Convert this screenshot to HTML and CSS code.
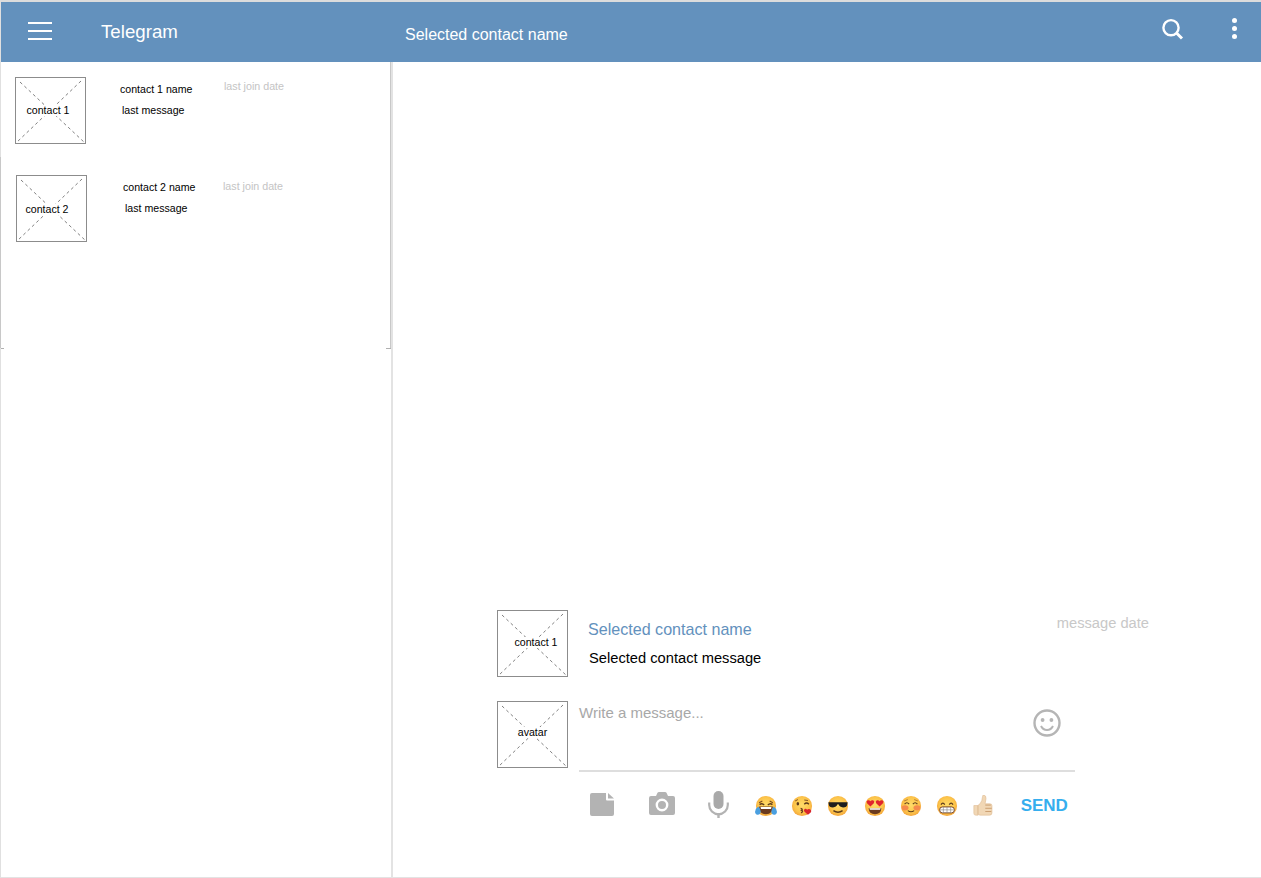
FILE: index.html
```html
<!DOCTYPE html>
<html lang="en">
<head>
  <meta charset="UTF-8">
  <meta name="viewport" content="width=device-width, initial-scale=1.0">
  <title>Telegram</title>
  <link rel="stylesheet" href="styles.css">
</head>
<body>

<svg class="defs" width="0" height="0" aria-hidden="true">
  <defs>
    <radialGradient id="face" cx="50%" cy="45%" r="55%">
      <stop offset="0%" stop-color="#ffdc6a"/>
      <stop offset="70%" stop-color="#fcc44a"/>
      <stop offset="100%" stop-color="#f4a63c"/>
    </radialGradient>
    <symbol id="x-box" viewBox="0 0 69 65">
      <line x1="4" y1="4" x2="69" y2="65"/>
      <line x1="65" y1="3" x2="0" y2="65"/>
    </symbol>
  </defs>
</svg>

<div class="app">
  <header class="topbar">
    <button class="menu-btn" aria-label="Menu"><span></span><span></span><span></span></button>
    <div class="brand">Telegram</div>
    <div class="chat-title">Selected contact name</div>
    <svg class="search-icon" width="24" height="24" viewBox="0 0 24 24">
      <circle cx="10" cy="9.7" r="7.6" fill="none" stroke="#fff" stroke-width="2.4"/>
      <line x1="15.5" y1="15" x2="21" y2="20.5" stroke="#fff" stroke-width="3"/>
    </svg>
    <div class="dots"><span></span><span></span><span></span></div>
  </header>

  <div class="main">
    <aside class="sidebar">
      <div class="contact-list">
        <div class="contact contact-first">
          <div class="thumb">
            <svg class="thumb-x"><use href="#x-box"/></svg>
            <span class="thumb-label label-c1">contact 1</span>
          </div>
          <div class="contact-text">
            <div class="contact-name">contact 1 name</div>
            <div class="contact-msg">last message</div>
          </div>
          <div class="join-date">last join date</div>
        </div>
        <div class="contact contact-second">
          <div class="thumb">
            <svg class="thumb-x"><use href="#x-box"/></svg>
            <span class="thumb-label label-c2">contact 2</span>
          </div>
          <div class="contact-text">
            <div class="contact-name">contact 2 name</div>
            <div class="contact-msg">last message</div>
          </div>
          <div class="join-date">last join date</div>
        </div>
      </div>
      <div class="list-end"><span class="tick-l"></span><span class="tick-r"></span></div>
    </aside>

    <section class="chat">
      <div class="message">
        <div class="thumb">
          <svg class="thumb-x"><use href="#x-box"/></svg>
          <span class="thumb-label label-msg">contact 1</span>
        </div>
        <div class="message-text">
          <div class="sender">Selected contact name</div>
          <div class="message-body">Selected contact message</div>
        </div>
        <div class="message-date">message date</div>
      </div>

      <div class="composer">
        <div class="thumb">
          <svg class="thumb-x"><use href="#x-box"/></svg>
          <span class="thumb-label label-avatar">avatar</span>
        </div>
        <div class="composer-main">
          <div class="input-box">
            <div class="placeholder">Write a message...</div>
            <svg class="smile" width="30" height="30" viewBox="0 0 30 30">
              <circle cx="15" cy="15" r="12.5" fill="none" stroke="#b5b5b5" stroke-width="2.4"/>
              <circle cx="10.6" cy="12" r="1.9" fill="#b5b5b5"/>
              <circle cx="19.4" cy="12" r="1.9" fill="#b5b5b5"/>
              <path d="M9 18c1.5 3 3.600 4 6 4s4.500-1 6-4" fill="none" stroke="#b5b5b5" stroke-width="2"/>
            </svg>
          </div>
          <div class="toolbar">
            <svg class="tool tool-file" width="24" height="23" viewBox="0 0 24 23">
              <path d="M2 0h14v6.500a1 1 0 0 0 1 1h7V21a2 2 0 0 1-2 2H2a2 2 0 0 1-2-2V2a2 2 0 0 1 2-2z" fill="#b3b3b3"/>
              <path d="M18 0l6 5.500h-6z" fill="#b3b3b3"/>
            </svg>
            <svg class="tool tool-camera" width="26" height="23" viewBox="0 0 26 23">
              <path d="M2 4h5l1.500-3.200Q9 0 10 0h6q1 0 1.500.8L19 4h5a2 2 0 0 1 2 2v15a2 2 0 0 1-2 2H2a2 2 0 0 1-2-2V6a2 2 0 0 1 2-2z" fill="#b3b3b3"/>
              <circle cx="13" cy="13" r="5.200" fill="none" stroke="#fff" stroke-width="2.400"/>
            </svg>
            <svg class="tool tool-mic" width="21" height="27" viewBox="0 0 21 27">
              <rect x="5.500" y="0" width="10" height="18" rx="5" fill="#a9a9a9"/>
              <path d="M1.200 11.500v2.500a9.300 9.300 0 0 0 18.600 0v-2.500" fill="none" stroke="#b3b3b3" stroke-width="2.200"/>
              <rect x="9.300" y="22" width="2.400" height="5" fill="#b3b3b3"/>
            </svg>

            <div class="emojis">
              <!-- tears of joy -->
              <svg class="emoji" viewBox="0 0 24 24">
                <circle cx="12" cy="12" r="11" fill="url(#face)"/>
                <path d="M4.500 8.500l3.500-2M19.500 8.500l-3.500-2" stroke="#7a4a20" stroke-width="1.200" fill="none"/>
                <path d="M5 10.500q2.500-2 5 .5M14 11q2.500-2.500 5-.5" stroke="#5b3a1c" stroke-width="1.500" fill="none"/>
                <path d="M4.500 12.500h15q0 8.500-7.500 8.500t-7.500-8.500z" fill="#6b3a1e"/>
                <path d="M6 13h12l-.5 2.200h-11z" fill="#fff"/>
                <path d="M0 18.500Q1 14 3.500 12.500 7 16 6 19.500 4.500 22 2 21.500 0 20.500 0 18.500zM24 18.500Q23 14 20.500 12.500 17 16 18 19.500 19.500 22 22 21.500 24 20.500 24 18.500z" fill="#4a9fe0"/>
              </svg>
              <!-- kiss -->
              <svg class="emoji" viewBox="0 0 24 24">
                <circle cx="12" cy="12" r="11" fill="url(#face)"/>
                <path d="M4.500 6.500l3-1.500M14.500 5.500l4 .5" stroke="#7a4a20" stroke-width="1" fill="none"/>
                <ellipse cx="7.500" cy="9.500" rx="1.400" ry="2" fill="#5b3a1c"/>
                <path d="M14.500 10q2.500-2.500 5 0" stroke="#5b3a1c" stroke-width="1.500" fill="none"/>
                <path d="M10.500 14.500q3 .8 1 2.200 2.500 1 -.5 2.800" stroke="#6b3a1e" stroke-width="1.400" fill="none"/>
                <path d="M18.500 21.500l-4-3.500q-1.200-2 .7-3 1.600-.4 2.300 1 1.500-1.300 3.200-.5 2.300 1.300.8 3.500z" fill="#d9262c"/>
              </svg>
              <!-- sunglasses -->
              <svg class="emoji" viewBox="0 0 24 24">
                <circle cx="12" cy="12" r="11" fill="url(#face)"/>
                <path d="M1.500 8h21l-.3 2q-.5 3.500-4.700 3.500-3.800 0-5-3.300h-1q-1.200 3.300-5 3.300-4.200 0-4.700-3.500z" fill="#1d1d1d"/>
                <path d="M7 17q5 3.500 10 0" stroke="#5b3a1c" stroke-width="1.500" fill="none"/>
              </svg>
              <!-- heart eyes -->
              <svg class="emoji" viewBox="0 0 24 24">
                <circle cx="12" cy="12" r="11" fill="url(#face)"/>
                <path d="M7 12.500L3.300 9Q2 6.800 4 5.800q1.800-.6 3 1 1.200-1.600 3-1 2 1 .7 3.200zM17 12.500L13.300 9q-1.300-2.200.7-3.200 1.800-.6 3 1 1.200-1.600 3-1 2 1 .7 3.200z" fill="#e0252e"/>
                <path d="M5 14.500h14q-.5 6.500-7 6.500t-7-6.500z" fill="#6b3a1e"/>
                <path d="M6 14.500h12l-.4 1.700H6.400z" fill="#fff"/>
              </svg>
              <!-- blush -->
              <svg class="emoji" viewBox="0 0 24 24">
                <circle cx="12" cy="12" r="11" fill="url(#face)"/>
                <ellipse cx="5.500" cy="14" rx="3.800" ry="2.800" fill="#f58a4c"/>
                <ellipse cx="18.500" cy="14" rx="3.800" ry="2.800" fill="#f58a4c"/>
                <path d="M5 10q2.500-3 5 0M14 10q2.500-3 5 0" stroke="#5b3a1c" stroke-width="1.200" fill="none"/>
                <path d="M4.500 6.500l4-1.500M19.500 6.500l-4-1.500" stroke="#a87030" stroke-width=".9" fill="none"/>
                <path d="M8.500 17q3.500 2.500 7 0" stroke="#5b3a1c" stroke-width="1.200" fill="none"/>
              </svg>
              <!-- grin -->
              <svg class="emoji" viewBox="0 0 24 24">
                <circle cx="12" cy="12" r="11" fill="url(#face)"/>
                <path d="M5.500 10.500q2-3.500 4 0M14.500 10.500q2-3.500 4 0" stroke="#5b3a1c" stroke-width="1.400" fill="none"/>
                <rect x="4" y="13" width="16" height="6.500" rx="3" fill="#fff" stroke="#6b3a1e" stroke-width="1"/>
                <path d="M4.500 16.200h15M8 13v6.500M12 13v6.500M16 13v6.500" stroke="#8a8a8a" stroke-width=".7"/>
              </svg>
              <!-- thumbs up -->
              <svg class="emoji" viewBox="0 0 24 24">
                <path d="M2 11.500h4.500V22H4q-2 0-2-2zM6.500 11.500q3-2 4.200-5.500l.8-4.500q0-1.500 1.500-1.500 2.500.5 2.300 4l-1 5.500h5q2.500 0 2.500 2v8q0 2.500-3 2.500H9q-2.500 0-2.500-1.500z" fill="#f1d7b5" stroke="#dcb88e" stroke-width=".6"/>
                <path d="M14.500 11h6M14.500 14.500h7M14.500 18h6.500" stroke="#c89a6c" stroke-width="1" fill="none"/>
              </svg>
            </div>

            <div class="send">SEND</div>
          </div>
        </div>
      </div>
    </section>
  </div>
</div>

</body>
</html>
```

FILE: styles.css
```css
* {
  box-sizing: border-box;
}
body {
  margin: 0;
  font-family: "Liberation Sans", Arial, sans-serif;
  background-color: #fff;
}
.defs {
  display: block;
}
.app {
  height: 878px;
  display: flex;
  flex-direction: column;
  border-top: 2px solid #dcdcdc;
  border-left: 1px solid #e0e0e0;
  border-bottom: 1px solid #e3e3e3;
}

/* top bar */
.topbar {
  height: 60px;
  flex: none;
  display: flex;
  align-items: flex-start;
  background-color: #6391bd;
  color: #fff;
}
.menu-btn {
  width: 24px;
  margin: 20px 0 0 27px;
  padding: 0;
  border: none;
  background: none;
  display: flex;
  flex-direction: column;
  gap: 6px;
}
.menu-btn span {
  display: block;
  height: 2px;
  background-color: #fff;
}
.brand {
  width: 304px;
  margin: 19px 0 0 49px;
  font-size: 18.7px;
  line-height: 22px;
}
.chat-title {
  width: 756px;
  margin-top: 24px;
  font-size: 16px;
  line-height: 18px;
}
.search-icon {
  margin-top: 16px;
}
.dots {
  margin: 16px 0 0 47px;
  display: flex;
  flex-direction: column;
  gap: 3px;
}
.dots span {
  width: 5px;
  height: 5px;
  border-radius: 50%;
  background-color: #fff;
}

/* layout */
.main {
  flex: 1;
  display: flex;
  min-height: 0;
}
.sidebar {
  width: 391px;
  flex: none;
  border-right: 1px solid #e3e3e3;
}
.contact-list {
  height: 286px;
  border-right: 1px solid #c8c8c8;
  padding-top: 15px;
}
.list-end {
  height: 1px;
  display: flex;
  justify-content: space-between;
}
.tick-l {
  width: 3px;
  background-color: #b0b0b0;
}
.tick-r {
  width: 5px;
  background-color: #b0b0b0;
}

/* contact rows */
.contact {
  display: flex;
  align-items: flex-start;
}
.contact-first {
  padding-left: 14px;
  height: 80px;
}
.contact-second {
  height: 191px;
  padding: 18px 0 0 15px;
  box-shadow: -1px 0 0 #c8c8c8;
}
.contact-text {
  font-size: 10.6px;
  line-height: 12px;
  color: #000;
}
.contact-first .contact-text {
  width: 138px;
  padding: 6px 0 0 34px;
}
.contact-second .contact-text {
  width: 136px;
  padding: 6px 0 0 36px;
}
.contact-name {
  margin-bottom: 9px;
}
.contact-msg {
  padding-left: 2px;
}
.join-date {
  font-size: 10.7px;
  line-height: 12px;
  color: #c4c4c4;
}
.contact-first .join-date {
  margin-top: 3px;
}
.contact-second .join-date {
  margin-top: 5px;
}

/* placeholder picture, label stacked on the crossed box */
.thumb {
  width: 71px;
  height: 67px;
  flex: none;
  display: grid;
  border: 1px solid #8c8c8c;
  background-color: #fff;
}
.thumb-x {
  grid-area: 1 / 1;
  width: 69px;
  height: 65px;
  stroke: #808080;
  stroke-width: 1;
  stroke-dasharray: 3 3;
}
.thumb-label {
  grid-area: 1 / 1;
  place-self: center;
  font-size: 10.6px;
  line-height: 11px;
  color: #000;
  background-color: #fff;
}
.label-c1 {
  margin-right: 5px;
}
.label-c2 {
  margin-right: 9px;
  margin-top: 1px;
}
.label-msg {
  margin-left: 7px;
  margin-bottom: 3px;
}
.label-avatar {
  margin-bottom: 5px;
}

/* chat */
.chat {
  flex: 1;
  display: flex;
  flex-direction: column;
  justify-content: flex-end;
  border-left: 1px solid #e3e3e3;
  padding: 0 0 57px 104px;
}
.message {
  width: 652px;
  display: flex;
  align-items: flex-start;
  margin-bottom: 24px;
}
.message-text {
  flex: 1;
  padding: 10px 0 0 20px;
}
.sender {
  font-size: 16.1px;
  line-height: 18px;
  color: #6391bd;
  margin-bottom: 12px;
}
.message-body {
  padding-left: 1px;
  font-size: 14.7px;
  line-height: 17px;
  color: #000;
}
.message-date {
  margin-top: 5px;
  font-size: 14.7px;
  line-height: 17px;
  color: #c8c8c8;
}
.composer {
  width: 578px;
  display: flex;
  align-items: flex-start;
}
.composer-main {
  flex: 1;
  margin-left: 11px;
}
.input-box {
  height: 71px;
  display: flex;
  justify-content: space-between;
  align-items: flex-start;
  border-bottom: 2px solid #dedede;
}
.placeholder {
  margin-top: 3px;
  font-size: 15px;
  line-height: 17px;
  color: #a8a8a8;
}
.smile {
  margin: 7px 13px 0 0;
}
.toolbar {
  height: 29px;
  margin-top: 19px;
  display: flex;
  align-items: center;
}
.tool-file {
  margin: 0 0 2px 11px;
}
.tool-camera {
  margin: 0 0 4px 35px;
}
.tool-mic {
  margin: 0 0 2px 33px;
}
.emojis {
  margin-left: 26px;
  display: flex;
  gap: 14.2px;
}
.emoji {
  width: 22px;
  height: 22px;
  flex: none;
}
.send {
  margin-left: 26.5px;
  font-size: 17px;
  font-weight: bold;
  color: #35aeee;
}
```
